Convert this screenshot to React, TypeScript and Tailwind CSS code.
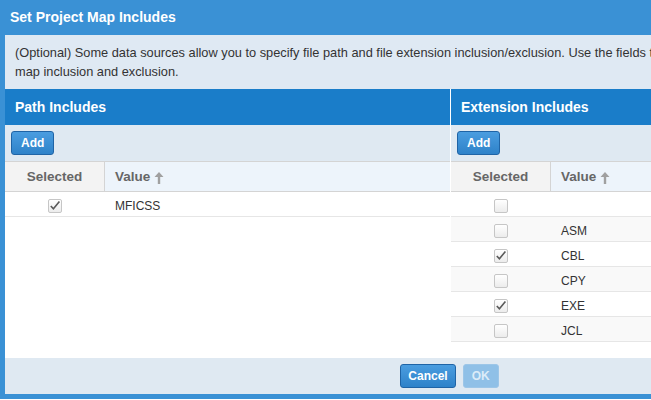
const FONT = { fontFamily: '"Liberation Sans", Arial, sans-serif' };

function SortArrow() {
  return (
    <svg width="10" height="12" viewBox="0 0 10 12" className="ml-1 inline-block">
      <path d="M5 0 L9.5 5 L6.2 5 L6.2 12 L3.8 12 L3.8 5 L0.5 5 Z" fill="#a0a0a0" />
    </svg>
  );
}

function Checkbox({ checked }: { checked: boolean }) {
  return (
    <div className="w-[14px] h-[14px] rounded-[2px] border border-[#c6c6c6] bg-gradient-to-b from-white to-[#ececec] relative">
      {checked && (
        <svg width="14" height="14" viewBox="0 0 14 14" className="absolute -left-px -top-px">
          <path d="M2.8 7 L5.4 9.8 L11.4 2.4" fill="none" stroke="#5a5a5a" strokeWidth="1.6" />
        </svg>
      )}
    </div>
  );
}

function Button({ label, disabled, pad }: { label: string; disabled?: boolean; pad: string }) {
  return (
    <button
      className={
        disabled
          ? `h-6 ${pad} rounded-[3px] border border-[#9cc6e8] bg-[#8fc0e7] text-[#dcecf8] text-[12px] font-bold`
          : `h-6 ${pad} rounded-[3px] border border-[#1f64a6] bg-gradient-to-b from-[#4a9de0] to-[#2e82c9] text-white text-[12px] font-bold`
      }
      style={FONT}
    >
      {label}
    </button>
  );
}

interface Row {
  value: string;
  selected: boolean;
}

function IncludesPanel({ title, rows, width }: { title: string; rows: Row[]; width: string }) {
  return (
    <div className={`${width} flex flex-col bg-white`}>
      <div className="h-9 bg-[#1a7dc9] flex items-center px-[10px] pt-px">
        <span className="text-white font-bold text-[14px]">{title}</span>
      </div>
      <div className="h-9 bg-[#dfe9f2] flex items-center px-[6px]">
        <Button label="Add" pad="px-[9px]" />
      </div>
      <div className="flex h-[31px] border-t border-b border-[#d4d4d4] text-[13.5px] font-bold text-[#666]">
        <div className="w-[100px] bg-[#f3f3f3] border-r border-[#d4d4d4] flex items-center justify-center pt-[2px]">
          Selected
        </div>
        <div className="flex-1 bg-[#edf4fb] flex items-center pl-[10px] pt-[2px]">
          Value
          <SortArrow />
        </div>
      </div>
      {rows.map((row, i) => (
        <div
          key={i}
          className={`flex h-[25px] pt-[3px] border-b border-[#e6e6e6] text-[12px] text-[#333] ${i % 2 === 1 ? 'bg-[#f9f9f9]' : 'bg-white'}`}
        >
          <div className="w-[100px] flex items-center justify-center">
            <Checkbox checked={row.selected} />
          </div>
          <div className="flex-1 flex items-center pl-[10px]">{row.value}</div>
        </div>
      ))}
    </div>
  );
}

export default function App() {
  const pathRows: Row[] = [{ value: 'MFICSS', selected: true }];
  const extRows: Row[] = [
    { value: '', selected: false },
    { value: 'ASM', selected: false },
    { value: 'CBL', selected: true },
    { value: 'CPY', selected: false },
    { value: 'EXE', selected: true },
    { value: 'JCL', selected: false },
  ];

  return (
    <div className="w-[651px] h-[400px] overflow-hidden bg-white" style={FONT}>
      <div className="w-[899px] h-[399px] flex flex-col border-x-[5px] border-b-[5px] border-[#3a91d5]">
        <div className="h-[35px] -mx-[5px] bg-[#3a91d5] flex items-center px-[10px]">
          <span className="text-white font-bold text-[14px]">Set Project Map Includes</span>
        </div>
        <div className="h-[54px] bg-[#dfe9f3] px-[10px] py-2 text-[12.8px] leading-[19px] text-[#333]">
          <div className="whitespace-nowrap">
            (Optional) Some data sources allow you to specify file path and file extension inclusion/exclusion. Use the fields to configure project
          </div>
          <div className="whitespace-nowrap">map inclusion and exclusion.</div>
        </div>
        <div className="flex-1 flex gap-px bg-white">
          <IncludesPanel title="Path Includes" rows={pathRows} width="w-[445px]" />
          <IncludesPanel title="Extension Includes" rows={extRows} width="flex-1" />
        </div>
        <div className="h-9 bg-[#dfe9f2] flex items-center justify-center gap-[7px]">
          <Button label="Cancel" pad="px-[7px]" />
          <Button label="OK" disabled pad="px-[8px]" />
        </div>
      </div>
    </div>
  );
}
